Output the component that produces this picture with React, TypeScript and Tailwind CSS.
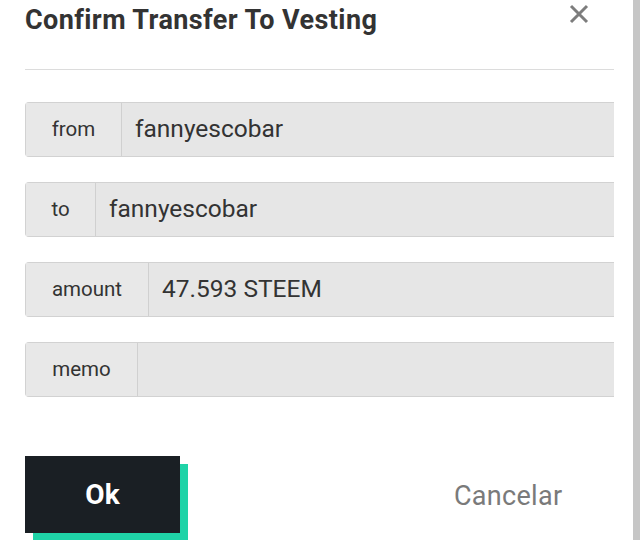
import React from "react";

function Row({ label, value, labelW }: { label: string; value: string; labelW: string }) {
  return (
    <div className="flex h-[55px] rounded-l-[4px] border-y border-l border-[#d2d2d2] bg-[#e6e6e6]">
      <div className={`${labelW} flex items-center justify-center border-r border-[#d0d0d0] bg-[#e8e8e8] text-[20.5px] text-[#333]`}>
        {label}
      </div>
      <div className="flex flex-1 items-center pl-[13px] text-[24.5px] text-[#333]">{value}</div>
    </div>
  );
}

export default function App() {
  return (
    <div className="flex h-[540px] w-[640px] overflow-hidden bg-white" style={{ fontFamily: "Roboto, 'Liberation Sans', sans-serif" }}>
      <div className="flex flex-1 flex-col pl-[25px] pr-[19px]">
        <div className="flex h-[70px] items-start justify-between border-b border-[#dcdcdc]">
          <h1 className="mt-[2px] text-[27px] font-bold leading-[36px] tracking-[0.4px] text-[#333]">Confirm Transfer To Vesting</h1>
          <svg width="20" height="20" viewBox="0 0 20 20" className="mr-[25px] mt-[4px]">
            <path d="M2 2 L18 18 M18 2 L2 18" stroke="#7d7d7d" strokeWidth="3" strokeLinecap="butt" />
          </svg>
        </div>
        <div className="mt-[32px] flex flex-col gap-[25px]">
          <Row label="from" value="fannyescobar" labelW="w-[96px]" />
          <Row label="to" value="fannyescobar" labelW="w-[70px]" />
          <Row label="amount" value="47.593 STEEM" labelW="w-[123px]" />
          <Row label="memo" value="" labelW="w-[112px]" />
        </div>
        <div className="mt-[59px] flex items-start">
          <div className="relative h-[77px] w-[155px]">
            <div className="absolute left-[8px] top-[8px] h-[77px] w-[155px] bg-[#1fd3a7]" />
            <button className="relative flex h-[77px] w-[155px] items-center justify-center bg-[#1a1f24] text-[28px] font-bold text-white">
              Ok
            </button>
          </div>
          <div className="ml-[274px] mt-[20px] text-[27px] tracking-[0.3px] text-[#7a7a7a]">Cancelar</div>
        </div>
      </div>
      <div className="w-[7px] bg-[#c6c6c6]" />
    </div>
  );
}
